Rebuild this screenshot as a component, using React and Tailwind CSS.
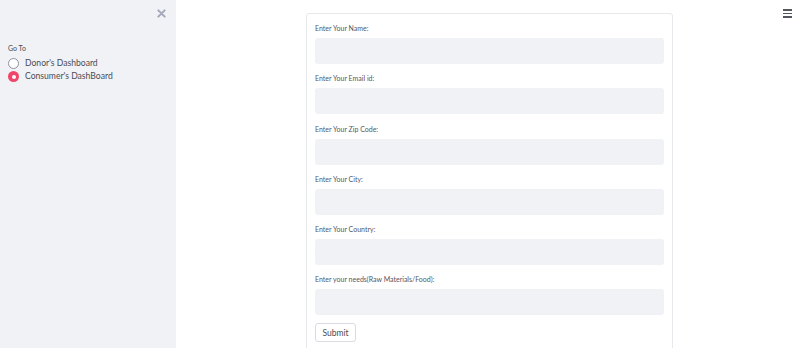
import { useState } from 'react'

const FIELDS = [
  'Enter Your Name:',
  'Enter Your Email id:',
  'Enter Your Zip Code:',
  'Enter Your City:',
  'Enter Your Country:',
  'Enter your needs(Raw Materials/Food):',
]

const PAGES = ["Donor's Dashboard", "Consumer's DashBoard"]

export default function App() {
  const [page, setPage] = useState(1)

  return (
    <div className="flex h-[348px] w-[806px] overflow-hidden bg-white font-['Lato',sans-serif] text-[#31333f]">
      {/* sidebar */}
      <aside className="flex h-full w-[176px] shrink-0 flex-col bg-[#f0f2f6]">
        <div className="flex justify-end pr-[10px] pt-[9px]">
          <svg width="9" height="9" viewBox="0 0 10 10" className="text-[#a3a8b8]">
            <path d="M1.5 1.5 L8.5 8.5 M8.5 1.5 L1.5 8.5" stroke="currentColor" strokeWidth="2.2" strokeLinecap="round" />
          </svg>
        </div>
        <div className="px-[8px] pt-[24px]">
          <p className="text-[7px] leading-[12px] text-[#4a4c55]">Go To</p>
          <div className="mt-[3px] flex flex-col">
            {PAGES.map((label, i) => (
              <button
                key={label}
                type="button"
                onClick={() => setPage(i)}
                className="flex h-[13px] items-center gap-[6px] text-left text-[8.6px] text-[#4a4c55]"
              >
                {i === page ? (
                  <span className="flex h-[11px] w-[11px] items-center justify-center rounded-full bg-[#f0466a]">
                    <span className="h-[4px] w-[4px] rounded-full bg-white" />
                  </span>
                ) : (
                  <span className="h-[11px] w-[11px] rounded-full border border-[#8f929c] bg-white" />
                )}
                {label}
              </button>
            ))}
          </div>
        </div>
      </aside>

      {/* main */}
      <main className="relative flex flex-1 justify-center">
        <button type="button" className="absolute right-[14px] top-[9px] flex flex-col gap-[2px]">
          <span className="h-[1.5px] w-[9px] bg-[#55575f]" />
          <span className="h-[1.5px] w-[9px] bg-[#55575f]" />
          <span className="h-[1.5px] w-[9px] bg-[#55575f]" />
        </button>

        <form className="mr-[3px] mt-[13px] h-[400px] w-[367px] rounded-[3px] border border-[#e6e8ec] px-[8px] pt-[8px]">
          {FIELDS.map((label, i) => (
            <div key={label} className={i ? 'mt-[8.3px]' : ''}>
              <label className="block text-[7px] leading-[12px] text-[#55575f]">{label}</label>
              <div className="mt-[4px] h-[26px] w-full rounded-[3px] bg-[#f0f2f6]" />
            </div>
          ))}
          <button
            type="button"
            className="mt-[8px] h-[19px] w-[41px] rounded-[3px] border border-[#d9dbe0] bg-white text-[8.5px] text-[#4a4c55]"
          >
            Submit
          </button>
        </form>
      </main>
    </div>
  )
}
